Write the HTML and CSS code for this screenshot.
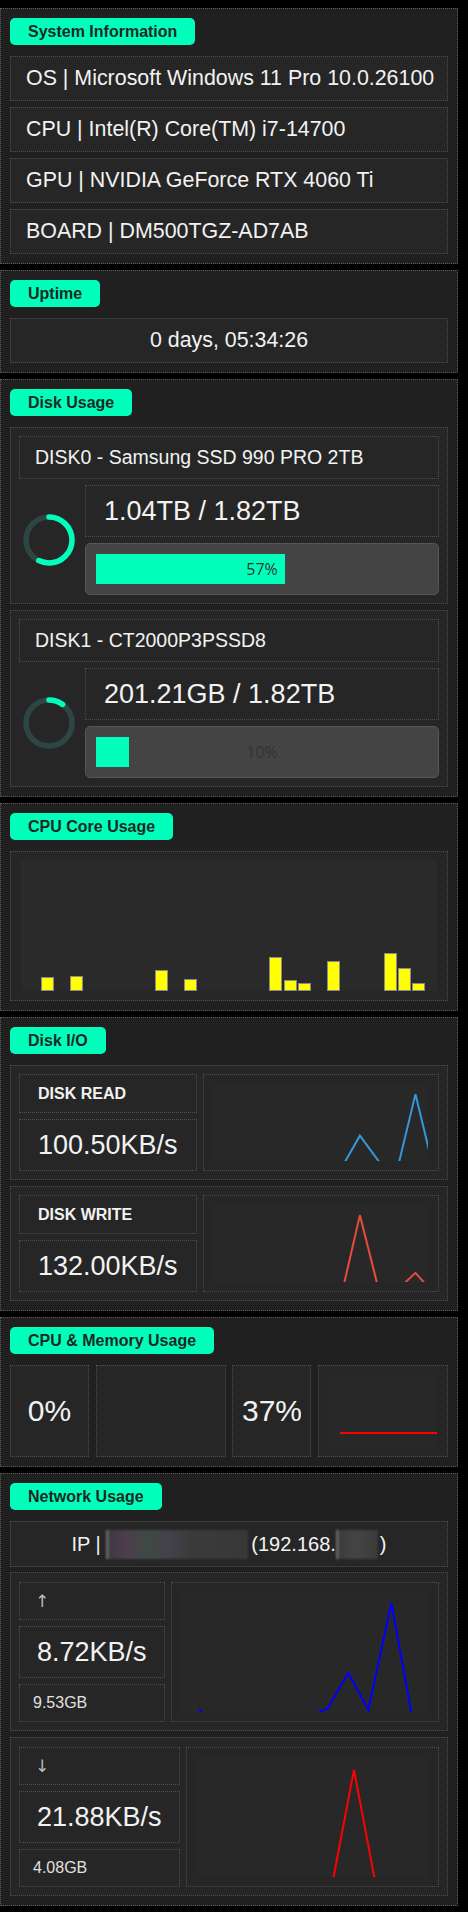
FILE: index.html
```html
<!DOCTYPE html>
<html>
<head>
<meta charset="utf-8">
<title>System Monitor</title>
<link rel="stylesheet" href="styles.css">
</head>
<body>

<section class="panel">
  <div class="tag">System Information</div>
  <div class="stack">
    <div class="box row">OS | Microsoft Windows 11 Pro 10.0.26100</div>
    <div class="box row">CPU | Intel(R) Core(TM) i7-14700</div>
    <div class="box row">GPU | NVIDIA GeForce RTX 4060 Ti</div>
    <div class="box row">BOARD | DM500TGZ-AD7AB</div>
  </div>
</section>

<section class="panel">
  <div class="tag">Uptime</div>
  <div class="box row center">0 days, 05:34:26</div>
</section>

<section class="panel">
  <div class="tag">Disk Usage</div>
  <div class="stack">
    <div class="box disk">
      <div class="box name">DISK0 - Samsung SSD 990 PRO 2TB</div>
      <div class="disk-body">
        <div class="donut">
          <svg width="54" height="54" viewBox="0 0 54 54">
            <circle cx="27" cy="27" r="23" class="ring-track"/>
            <circle cx="27" cy="27" r="23" class="ring-fill" stroke-dasharray="82.4 200" transform="rotate(-90 27 27)"/>
          </svg>
        </div>
        <div class="disk-right">
          <div class="box amount">1.04TB / 1.82TB</div>
          <div class="bar"><div class="fill" style="width:57%"></div><span class="pct">57%</span></div>
        </div>
      </div>
    </div>
    <div class="box disk">
      <div class="box name">DISK1 - CT2000P3PSSD8</div>
      <div class="disk-body">
        <div class="donut">
          <svg width="54" height="54" viewBox="0 0 54 54">
            <circle cx="27" cy="27" r="23" class="ring-track"/>
            <circle cx="27" cy="27" r="23" class="ring-fill" stroke-dasharray="14.5 200" transform="rotate(-90 27 27)"/>
          </svg>
        </div>
        <div class="disk-right">
          <div class="box amount">201.21GB / 1.82TB</div>
          <div class="bar"><div class="fill" style="width:10%"></div><span class="pct">10%</span></div>
        </div>
      </div>
    </div>
  </div>
</section>

<section class="panel">
  <div class="tag">CPU Core Usage</div>
  <div class="box corebox">
    <svg class="cores" width="416" height="130" viewBox="0 0 416 130">
      <g class="corebar">
        <rect x="20.5" y="116.5" width="12" height="13"/>
        <rect x="49.5" y="115.5" width="12" height="14"/>
        <rect x="134.5" y="109.5" width="12" height="20"/>
        <rect x="163.5" y="118.5" width="12" height="11"/>
        <rect x="248.5" y="96.5" width="12" height="33"/>
        <rect x="263.5" y="119.5" width="12" height="10"/>
        <rect x="277.5" y="122.5" width="12" height="7"/>
        <rect x="306.5" y="100.5" width="12" height="29"/>
        <rect x="363.5" y="92.5" width="12" height="37"/>
        <rect x="377.5" y="107.5" width="12" height="22"/>
        <rect x="391.5" y="122.5" width="12" height="7"/>
      </g>
    </svg>
  </div>
</section>

<section class="panel">
  <div class="tag">Disk I/O</div>
  <div class="stack">
    <div class="box io">
      <div class="box label">DISK READ</div>
      <div class="box value">100.50KB/s</div>
      <div class="box chart io-chart">
        <svg viewBox="0 0 216 76" preserveAspectRatio="none">
          <polyline class="line read" points="130.7,79 147,51 168,79"/>
          <polyline class="line read" points="186,79 203,10 220,79"/>
        </svg>
      </div>
    </div>
    <div class="box io">
      <div class="box label">DISK WRITE</div>
      <div class="box value">132.00KB/s</div>
      <div class="box chart io-chart">
        <svg viewBox="0 0 216 76" preserveAspectRatio="none">
          <polyline class="line write" points="130.5,80 147,10 165,80"/>
          <polyline class="line write" points="191,78 203,67 213,78"/>
        </svg>
      </div>
    </div>
  </div>
</section>

<section class="panel">
  <div class="tag">CPU &amp; Memory Usage</div>
  <div class="cm">
    <div class="cm-group">
      <div class="box pctbox"><div class="clip">0%</div></div>
      <div class="box chart cm-chart"></div>
    </div>
    <div class="cm-group">
      <div class="box pctbox"><div class="clip">37%</div></div>
      <div class="box chart cm-chart">
        <svg viewBox="0 0 108 72" preserveAspectRatio="none">
          <line x1="11" y1="58" x2="108" y2="58" class="memline"/>
        </svg>
      </div>
    </div>
  </div>
</section>

<section class="panel">
  <div class="tag">Network Usage</div>
  <div class="stack net-stack">
    <div class="box row center ip">IP |&nbsp;<span class="blur b1"></span>(192.168.<span class="blur b2"></span>)</div>
    <div class="box net">
      <div class="box label arrow">↑</div>
      <div class="box value">8.72KB/s</div>
      <div class="box total">9.53GB</div>
      <div class="box chart net-chart">
        <svg viewBox="0 0 246 120" preserveAspectRatio="none">
          <polyline class="line up" points="17,117 21,121"/>
          <polyline class="line up" points="136,121 138,119.5 145,117 166,81 186,118 209,11 229,121"/>
        </svg>
      </div>
    </div>
    <div class="box net">
      <div class="box label arrow">↓</div>
      <div class="box value">21.88KB/s</div>
      <div class="box total">4.08GB</div>
      <div class="box chart net-chart">
        <svg viewBox="0 0 230 121" preserveAspectRatio="none">
          <polyline class="line down" points="135.4,123 156,13 176.6,123"/>
        </svg>
      </div>
    </div>
  </div>
</section>

</body>
</html>
```
FILE: styles.css
```css
* {
  box-sizing: border-box;
}

body {
  margin: 0;
  padding-top: 8px;
  background: #000;
  font-family: "Liberation Sans", Arial, sans-serif;
  color: #f2f2f2;
}

.panel {
  width: 458px;
  background: #202020;
  border: 1px dotted #5c5c5c;
  padding: 9px;
  margin-bottom: 6px;
  display: flex;
  flex-direction: column;
}

.tag {
  align-self: flex-start;
  height: 27px;
  line-height: 27px;
  padding: 0 18px;
  background: #00ffbb;
  color: #1d2824;
  font-weight: bold;
  font-size: 16px;
  border-radius: 5px;
  margin-bottom: 11px;
}

.box {
  background: #262626;
  border: 1px dotted #4e4e4e;
}

.stack {
  display: flex;
  flex-direction: column;
  gap: 6px;
}

.row {
  height: 45px;
  display: flex;
  align-items: center;
  padding-left: 15px;
  font-size: 21.4px;
  white-space: nowrap;
}

.row.center {
  justify-content: center;
  padding-left: 0;
}

/* Disk usage */
.disk {
  padding: 8px;
  display: flex;
  flex-direction: column;
  gap: 6px;
}

.name {
  height: 43px;
  display: flex;
  align-items: center;
  padding-left: 15px;
  font-size: 19.5px;
}

.disk-body {
  display: grid;
  grid-template-columns: 60px 1fr;
  gap: 6px;
}

.donut {
  display: flex;
  align-items: center;
  justify-content: center;
}

.donut svg {
  display: block;
}

.ring-track {
  fill: none;
  stroke: #2e4643;
  stroke-width: 5.5;
}

.ring-fill {
  fill: none;
  stroke: #00ffbb;
  stroke-width: 5.5;
  stroke-linecap: round;
}

.disk-right {
  display: flex;
  flex-direction: column;
  gap: 6px;
}

.amount {
  height: 52px;
  display: flex;
  align-items: center;
  padding-left: 18px;
  font-size: 27px;
}

.bar {
  position: relative;
  height: 52px;
  background: #444;
  border: 1px solid #565656;
  border-radius: 5px;
  padding: 10px;
}

.fill {
  height: 30px;
  background: #00ffbb;
}

.pct {
  position: absolute;
  inset: 0;
  display: flex;
  align-items: center;
  justify-content: center;
  font-family: "Open Sans", sans-serif;
  font-size: 16px;
  color: #333;
}

/* CPU cores */
.corebox {
  padding: 9px 10px;
}

.cores {
  display: block;
  background: #2a2a2a;
}

.corebar rect {
  fill: #ffff00;
  stroke: #8a8a8a;
  stroke-width: 1;
}

/* Charts */
.chart {
  padding: 9px 10px;
  overflow: hidden;
}

.chart svg {
  display: block;
  width: 100%;
  height: 100%;
  background: #282828;
  overflow: hidden;
}

.line {
  fill: none;
  stroke-width: 2;
  vector-effect: non-scaling-stroke;
}

.read {
  stroke: #3498db;
}

.write {
  stroke: #e74c3c;
}

.up {
  stroke: #0000ff;
}

.down {
  stroke: #ff0000;
}

/* Disk I/O */
.io {
  padding: 8px;
  display: grid;
  grid-template-columns: auto 1fr;
  grid-template-rows: 39px 52px;
  gap: 6px;
}

.io-chart {
  grid-column: 2;
  grid-row: 1 / 3;
}

.label {
  display: flex;
  align-items: center;
  padding: 0 18px;
  font-size: 16px;
  font-weight: bold;
}

.value {
  display: flex;
  align-items: center;
  padding: 0 18px;
  font-size: 27px;
  white-space: nowrap;
}

/* CPU & memory */
.cm {
  display: flex;
  gap: 6px;
}

.cm-group {
  flex: 1;
  display: grid;
  grid-template-columns: 79px 1fr;
  gap: 7px;
  height: 92px;
}

.pctbox {
  display: flex;
  align-items: center;
  padding: 0 9px;
}

.clip {
  width: 100%;
  overflow: hidden;
  white-space: nowrap;
  text-align: center;
  font-size: 30px;
}

.memline {
  stroke: #ff0000;
  stroke-width: 2;
  vector-effect: non-scaling-stroke;
}

/* Network */
.net-stack {
  gap: 5px;
}

.ip {
  height: 46px;
  font-size: 20px;
}

.blur {
  display: inline-block;
  height: 29px;
  vertical-align: middle;
  filter: blur(1.2px);
}

.b1 {
  width: 142px;
  margin-right: 3px;
  background: linear-gradient(90deg, #6a6a6a 0 2px, #3d3a42 3px, #4d3d4e 14%, #3e4a42 30%, #45404a 45%, #3b3b3b 60%, #383838 100%);
}

.b2 {
  width: 42px;
  margin-right: 2px;
  background: linear-gradient(90deg, #6a6a6a 0 2px, #3c3c3c 3px, #454545 50%, #3a3a3a 100%);
}

.net {
  padding: 9px 8px 8px 8px;
  display: grid;
  grid-template-columns: auto 1fr;
  grid-template-rows: 38px 52px 38px;
  gap: 6px;
}

.net + .net {
  margin-top: 1px;
}

.net-chart {
  grid-column: 2;
  grid-row: 1 / 4;
}

.arrow {
  font-weight: normal;
  font-family: "DejaVu Sans", sans-serif;
  font-size: 17px;
  color: #bdbdbd;
  padding-left: 15px;
}

.net .value {
  padding: 0 17px;
}

.total {
  display: flex;
  align-items: center;
  padding-left: 13px;
  font-size: 16px;
  color: #e0e0e0;
}
```
